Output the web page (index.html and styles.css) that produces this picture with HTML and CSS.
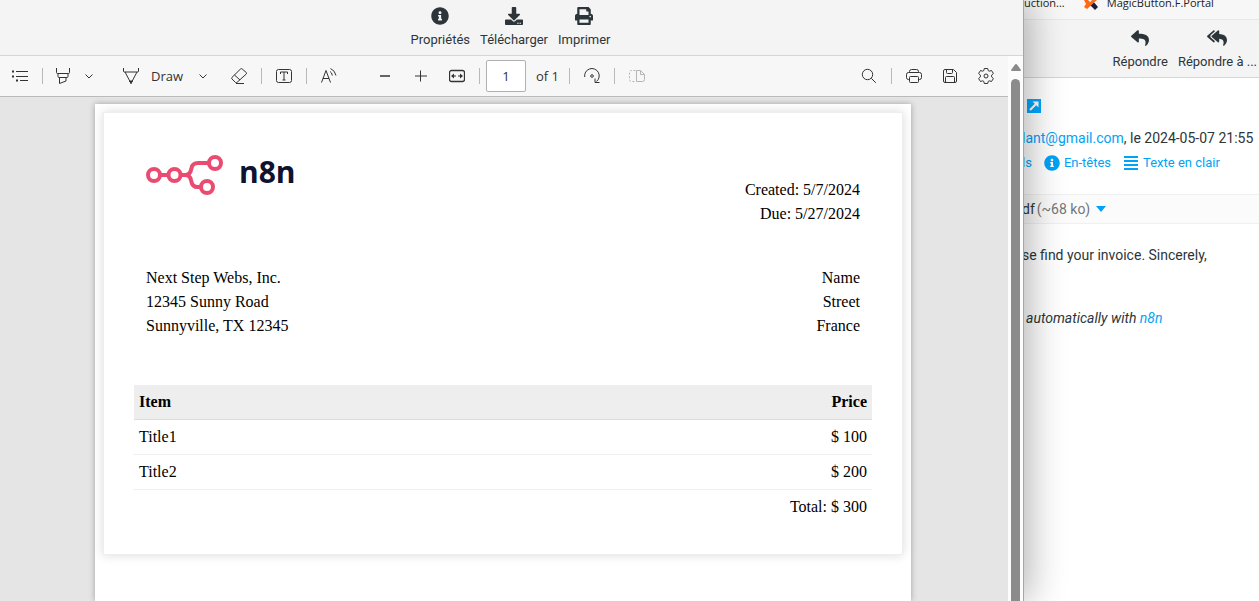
FILE: index.html
```
<!DOCTYPE html>
<html lang="fr">
<head>
<meta charset="utf-8">
<title>Facture</title>
<link rel="stylesheet" href="styles.css">
</head>
<body>
<div class="desktop">
  <main class="preview">
    <header class="preview-actions">
      <button class="action"><svg class="action-icon" viewBox="0 0 512 512"><path d="M256 8C119.043 8 8 119.083 8 256c0 136.997 111.043 248 248 248s248-111.003 248-248C504 119.083 392.957 8 256 8zm0 110c23.196 0 42 18.804 42 42s-18.804 42-42 42-42-18.804-42-42 18.804-42 42-42zm56 254c0 6.627-5.373 12-12 12h-88c-6.627 0-12-5.373-12-12v-24c0-6.627 5.373-12 12-12h12v-64h-12c-6.627 0-12-5.373-12-12v-24c0-6.627 5.373-12 12-12h64c6.627 0 12 5.373 12 12v100h12c6.627 0 12 5.373 12 12v24z"/></svg>Propriétés</button>
      <button class="action"><svg class="action-icon" viewBox="0 0 512 512"><path d="M216 0h80c13.3 0 24 10.7 24 24v168h87.7c17.8 0 26.7 21.5 14.1 34.1L269.7 378.3c-7.5 7.5-19.8 7.5-27.3 0L90.1 226.1c-12.6-12.6-3.7-34.1 14.1-34.1H192V24c0-13.3 10.7-24 24-24zm296 376v112c0 13.3-10.7 24-24 24H24c-13.3 0-24-10.7-24-24V376c0-13.3 10.7-24 24-24h146.7l49 49c20.1 20.1 52.5 20.1 72.6 0l49-49H488c13.3 0 24 10.7 24 24zm-124 88c0-11-9-20-20-20s-20 9-20 20 9 20 20 20 20-9 20-20zm64 0c0-11-9-20-20-20s-20 9-20 20 9 20 20 20 20-9 20-20z"/></svg>Télécharger</button>
      <button class="action"><svg class="action-icon" viewBox="0 0 512 512"><path d="M448 192V77.25c0-8.49-3.37-16.62-9.37-22.63L393.37 9.37c-6-6-14.14-9.37-22.63-9.37H96C78.33 0 64 14.33 64 32v160c-35.35 0-64 28.65-64 64v112c0 8.84 7.16 16 16 16h48v96c0 17.67 14.33 32 32 32h320c17.67 0 32-14.33 32-32v-96h48c8.84 0 16-7.16 16-16V256c0-35.35-28.65-64-64-64zm-64 256H128v-96h256v96zm0-224H128V64h192v48c0 8.84 7.16 16 16 16h48v96zm48 72c-13.25 0-24-10.75-24-24 0-13.26 10.75-24 24-24s24 10.74 24 24c0 13.25-10.75 24-24 24z"/></svg>Imprimer</button>
    </header>
    <div class="viewer">
      <div class="viewer-main">
        <div class="toolbar">
          <button class="tool" aria-label="Contents"><svg viewBox="0 0 16 16"><path d="M4 3.5h12M4 8.5h12M8 12.5h8"/><path d="M0 3.5h2M0 8.5h2M4 12.5h2" stroke-width="2"/></svg></button>
          <span class="sep sep-tight"></span>
          <button class="tool" aria-label="Highlight"><svg viewBox="0 0 16 16"><path d="M1.500 0v4.500q0 1 1 1h11q1 0 1-1V0M3 5.500v3q0 1 1 1h8q1 0 1-1v-3M4.500 9.500v6l6.500-2.500V9.500"/></svg></button>
          <button class="tool chevron gap-m" aria-label="Highlight options"><svg viewBox="0 0 8 8"><path d="M0.500 2.500L4 6l3.500-3.500"/></svg></button>
          <button class="tool draw"><svg viewBox="0 0 16 16"><path d="M0.500 0v3q0 1 1 1h13q1 0 1-1V0M2 4l6 11.300L14 4"/><path d="M6.600 13h2.800L8 15.500z" fill="#333"/></svg>Draw</button>
          <button class="tool chevron gap-s" aria-label="Draw options"><svg viewBox="0 0 8 8"><path d="M0.500 2.500L4 6l3.500-3.500"/></svg></button>
          <button class="tool gap-xl" aria-label="Erase"><svg viewBox="0 0 16 16"><path d="M9.500 1L0.900 9.500q-.7.700 0 1.400l3.500 3.500q.8.700 1.600 0L15.300 6q.7-.8 0-1.500L11.200 1q-.8-.700-1.700 0zM3.500 7l5.500 5M5 15.500h8"/></svg></button>
          <span class="sep"></span>
          <button class="tool" aria-label="Add text"><svg viewBox="0 0 16 16"><rect x="0.500" y="1.500" width="15" height="13" rx="2"/><path d="M4.500 6V4h7v2M8 4v8M6.500 12h3"/></svg></button>
          <span class="sep"></span>
          <button class="tool" aria-label="Read aloud"><svg viewBox="0 0 16 16"><path d="M0.500 14.500L5 2.500l4.500 12M2 10.500h6M9 3.500q2 1 2.300 4M9.500.500q4.500 2 5.500 7"/></svg></button>
          <button class="tool zoom-out" aria-label="Zoom out"><svg viewBox="0 0 16 16"><path d="M3 8h10" stroke-width="1.500"/></svg></button>
          <button class="tool gap-l" aria-label="Zoom in"><svg viewBox="0 0 16 16"><path d="M2 8h12M7.500 2.500v11"/></svg></button>
          <button class="tool gap-l" aria-label="Fit to width"><svg viewBox="0 0 16 16"><rect x="0.500" y="2.500" width="15" height="11" rx="2" stroke-width="1.300"/><path d="M3 8h4M13 8H9"/><path d="M2 8l3-2.500v5zM14 8l-3-2.500v5z" fill="#333" stroke="none"/></svg></button>
          <span class="sep sep-page"></span>
          <label class="page-field"><input class="page-input" type="text" value="1" aria-label="Page"> of 1</label>
          <span class="sep sep-after"></span>
          <button class="tool" aria-label="Rotate"><svg viewBox="0 0 16 16"><path d="M0.700 9A7.300 7.300 0 1 1 12.500 13.500M11 10.500v4h4.500"/><circle cx="8" cy="8" r="1.300"/></svg></button>
          <span class="sep"></span>
          <button class="tool disabled" disabled aria-label="Page view"><svg viewBox="0 0 16 16"><path d="M6.500 2.500h-4q-2 0-2 2v7q0 2 2 2h4" stroke-dasharray="2 1.500"/><path d="M7.500 2.500v11h6q2 0 2-2V6.500l-4-4zM11.500 2.500v4h4"/></svg></button>
          <span class="spacer"></span>
          <button class="tool" aria-label="Search"><svg viewBox="0 0 16 16"><circle cx="6.500" cy="6.500" r="5.200"/><path d="M10.300 10.300l4.500 4.500"/></svg></button>
          <span class="sep"></span>
          <button class="tool" aria-label="Print"><svg viewBox="0 0 16 16"><path d="M3.500 11.500h-1q-2 0-2-2V6.500q0-2 2-2h11q2 0 2 2v3q0 2-2 2h-1M3.500 4.500v-1q0-2 2-2h5q2 0 2 2v1"/><rect x="3.500" y="8.500" width="9" height="6" rx="1"/></svg></button>
          <button class="tool gap-l" aria-label="Save"><svg viewBox="0 0 16 16"><path d="M3 1.500h8.500l3 3V13q0 1.500-1.500 1.500H3q-1.500 0-1.500-1.500V3Q1.500 1.500 3 1.500zM4.500 1.500v3q0 1 1 1h4q1 0 1-1v-3M3.500 14.500v-5q0-1 1-1h7q1 0 1 1v5"/></svg></button>
          <button class="tool gap-l" aria-label="Settings"><svg viewBox="0 0 16 16"><path d="M6.300.500h3.400l.5 2.100 1 .6 2.300-.7 1.900 3-1.800 1.600v1.800l1.800 1.600-1.900 3-2.300-.7-1 .6-.5 2.100H6.300l-.5-2.100-1-.6-2.300.7-1.900-3 1.800-1.600V7.100L.6 5.500l1.900-3 2.300.7 1-.6z" stroke-linejoin="round"/><circle cx="8" cy="8" r="2"/></svg></button>
        </div>
        <div class="canvas">
          <article class="sheet">
            <div class="invoice">
              <div class="invoice-top">
                <div class="logo"><svg class="logo-mark" viewBox="0 0 78 42"><g fill="none" stroke="#ea4b71" stroke-width="4"><circle cx="8" cy="21" r="6"/><circle cx="28.500" cy="21" r="6"/><circle cx="69" cy="9" r="6"/><circle cx="61" cy="33" r="6"/><path d="M14 21h8.500M34.500 21H39q5 0 6-5l.5-2Q46.500 9 52 9h11M39 21q5 0 6 5l.5 2q1 5 6 5H55"/></g></svg>n8n</div>
                <div class="dates">Created: 5/7/2024<br>Due: 5/27/2024</div>
              </div>
              <div class="parties">
                <address>Next Step Webs, Inc.<br>12345 Sunny Road<br>Sunnyville, TX 12345</address>
                <address class="client">Name<br>Street<br>France</address>
              </div>
              <table class="items">
                <thead><tr><th>Item</th><th>Price</th></tr></thead>
                <tbody>
                  <tr><td>Title1</td><td>$ 100</td></tr>
                  <tr><td>Title2</td><td>$ 200</td></tr>
                </tbody>
                <tfoot><tr><td></td><td>Total: $ 300</td></tr></tfoot>
              </table>
            </div>
          </article>
        </div>
      </div>
      <div class="scrollbar"><svg class="scroll-arrow" viewBox="0 0 10 8"><path d="M5 0q.6 0 1 .6L10 6q0 1-1 1H1Q0 7 0 6L4 .6Q4.400 0 5 0z"/></svg><div class="thumb"></div></div>
    </div>
  </main>

  <aside class="mail">
    <nav class="bookmarks">
      <span>uction...</span>
      <span class="bookmark"><svg class="bookmark-icon" viewBox="0 0 16 11"><path d="M9 0l6 7-3 3-5-5z" fill="#1d1d3b"/><path d="M1 0h4l2 2 3-2h4L4 9 1 7l2-3z" fill="#ff6a13"/></svg>MagicButton.F.Portal</span>
    </nav>
    <div class="mail-actions">
      <button class="action"><svg class="action-icon" viewBox="0 0 512 512"><path d="M8.309 189.836L184.313 37.851C199.719 24.546 224 35.347 224 56.015v80.053c160.629 1.839 288 34.032 288 186.258 0 61.441-39.581 122.309-83.333 154.132-13.653 9.931-33.111-2.533-28.077-18.631 45.344-145.012-21.507-183.510-176.590-185.742V360c0 20.700-24.300 31.453-39.687 18.164l-176.004-152c-11.071-9.562-11.086-26.753 0-36.328z"/></svg>Répondre</button>
      <button class="action"><svg class="action-icon wide" viewBox="0 0 576 512"><path d="M136.309 189.836L312.313 37.851C327.720 24.546 352 35.348 352 56.015v82.763c129.182 10.231 224 52.212 224 183.548 0 61.441-39.582 122.309-83.333 154.132-13.653 9.931-33.111-2.533-28.077-18.631 38.512-123.162-3.922-169.482-112.590-182.015v84.175c0 20.701-24.300 31.453-39.687 18.164L136.309 226.164c-11.071-9.561-11.086-26.753 0-36.328zm-128 36.328L184.313 378.150C199.700 391.439 224 380.687 224 359.986v-15.818l-108.606-93.785A55.960 55.960 0 0 1 96 207.998a55.953 55.953 0 0 1 19.393-42.380L224 71.832V56.015c0-20.667-24.280-31.469-39.687-18.164L8.309 189.836c-11.086 9.575-11.071 26.767 0 36.328z"/></svg>Répondre à ...</button>
    </div>
    <section class="mail-head">
      <a class="popout" href="#" aria-label="Ouvrir"><svg viewBox="0 0 14 14"><path d="M3 11l6-6" stroke="#fff" stroke-width="2.200"/><path d="M5.500 2.500h6v6z" fill="#fff"/></svg></a>
      <p class="sender"><a href="#">lant@gmail.com</a>, le 2024-05-07 21:55</p>
      <div class="links">
        <a href="#">ls</a>
        <a class="link" href="#"><svg viewBox="0 0 512 512"><path d="M256 8C119.043 8 8 119.083 8 256c0 136.997 111.043 248 248 248s248-111.003 248-248C504 119.083 392.957 8 256 8zm0 110c23.196 0 42 18.804 42 42s-18.804 42-42 42-42-18.804-42-42 18.804-42 42-42zm56 254c0 6.627-5.373 12-12 12h-88c-6.627 0-12-5.373-12-12v-24c0-6.627 5.373-12 12-12h12v-64h-12c-6.627 0-12-5.373-12-12v-24c0-6.627 5.373-12 12-12h64c6.627 0 12 5.373 12 12v100h12c6.627 0 12 5.373 12 12v24z"/></svg>En-têtes</a>
        <a class="link" href="#"><svg viewBox="0 0 16 16"><path d="M1 1h14v2H1zM1 5h14v2H1zM1 9h14v2H1zM1 13h14v2H1z"/></svg>Texte en clair</a>
      </div>
    </section>
    <div class="attachment"><span>df</span><span class="size">(~68 ko)</span><svg class="caret" viewBox="0 0 10 6"><path d="M0 0h10L5 6z"/></svg></div>
    <section class="body">
      <p>se find your invoice. Sincerely,</p>
      <p class="signature">automatically with <a href="#">n8n</a></p>
    </section>
  </aside>
</div>
</body>
</html>
```
FILE: styles.css
```
* { box-sizing: border-box; }
body { margin: 0; font-family: Roboto, sans-serif; color: #2c363a; background: #fff; }
p { margin: 0; }
a { color: #00a3f7; text-decoration: none; }
button { border: 0; padding: 0; background: none; color: inherit; font: inherit; }
svg { display: block; flex: none; }

.desktop { display: grid; grid-template-columns: minmax(0, 1fr) 235px; height: 100vh; overflow: hidden; }

.preview { display: flex; flex-direction: column; min-height: 0; position: relative; z-index: 1; border-right: 1px solid #a6a6a6; box-shadow: 4px 0 36px rgba(0, 0, 0, 0.32); background: #fff; }
.preview-actions { display: flex; justify-content: center; gap: 10px; padding: 7px 2px 7px 0; background: #f4f4f4; border-bottom: 1px solid #d3d6d9; }
.action { display: flex; flex-direction: column; align-items: center; gap: 6px; font-size: 13px; line-height: 17px; white-space: nowrap; }
.action-icon { width: 18px; height: 18px; fill: #2c363a; }
.action-icon.wide { width: 20px; }

.viewer { display: flex; flex: 1; min-height: 0; }
.viewer-main { flex: 1; min-width: 0; display: flex; flex-direction: column; }
.toolbar { display: flex; align-items: center; height: 41px; flex: none; padding: 0 14px 0 12px; background: #f7f7f7; border-bottom: 1px solid #b9bbbb; font: 13px/18px "Open Sans", sans-serif; color: #333; }
.tool svg { width: 16px; height: 16px; fill: none; stroke: #333; }
.tool.chevron svg { width: 8px; height: 8px; }
.tool.disabled svg { stroke: #b5b5b5; }
.sep { width: 1px; height: 16px; margin: 0 14px; background: #b9b9b9; }
.sep-tight { margin-right: 12px; }
.sep-page { margin-right: 6px; }
.sep-after { margin-left: 10px; }
.gap-m { margin-left: 14px; }
.gap-s { margin-left: 16px; }
.gap-l { margin-left: 20px; }
.gap-xl { margin-left: 24px; }
.draw { display: flex; align-items: center; gap: 12px; margin-left: 30px; }
.zoom-out { margin-left: 40px; }
.page-field { display: flex; align-items: center; gap: 10px; }
.page-input { width: 40px; height: 32px; padding: 0; border: 1px solid #b0b0b0; border-radius: 2px; background: #fff; text-align: center; font: inherit; color: inherit; }
.spacer { flex: 1; }

.canvas { flex: 1; min-height: 0; display: flex; justify-content: center; padding: 7px 2px 0 0; background: #e5e5e5; overflow: hidden; }
.sheet { width: 816px; padding: 8px; background: #fff; box-shadow: 0 0 6px rgba(0, 0, 0, 0.3); font: 16px/24px "Liberation Serif", serif; color: #000; }
.invoice { padding: 30px; border: 1px solid #eee; box-shadow: 0 0 10px rgba(0, 0, 0, 0.15); }
.invoice-top, .parties { display: flex; justify-content: space-between; padding: 0 12px; }
.invoice-top { padding-top: 11px; padding-bottom: 40px; }
.logo { display: flex; gap: 15px; height: 42px; font: 700 30px/36px "Open Sans", sans-serif; color: #101330; }
.logo-mark { width: 78px; height: 42px; }
.dates { padding-top: 24px; text-align: right; }
.client { text-align: right; }
address { font-style: normal; }
.items { width: 100%; margin-top: 47px; border-collapse: separate; border-spacing: 0; }
.items th, .items td { padding: 5px; text-align: left; border-bottom: 1px solid #eee; }
.items th { background: #eee; border-bottom-color: #ddd; }
.items th:last-child, .items td:last-child { text-align: right; }
.items tfoot td { border-bottom: 0; }

.scrollbar { width: 15px; padding: 8px 3px 0; display: flex; flex-direction: column; align-items: center; gap: 7px; background: #fcfcfc; }
.scroll-arrow { width: 10px; height: 8px; fill: #8b8b8b; }
.thumb { flex: 1; width: 9px; background: #8b8b8b; border-radius: 5px 5px 0 0; }

.mail { min-width: 0; margin-left: -2px; overflow: hidden; white-space: nowrap; font-size: 14px; line-height: 20px; }
.bookmarks { display: flex; align-items: flex-start; gap: 18px; height: 20px; padding-left: 2px; overflow: hidden; background: #f7f7f7; border-bottom: 1px solid #e8e8e8; font: 11px/6px "Open Sans", sans-serif; color: #222; }
.bookmark { display: flex; gap: 8px; }
.bookmark-icon { width: 16px; height: 11px; }
.mail-actions { display: flex; justify-content: flex-end; gap: 10px; padding: 9px 2px 7px 0; background: #f4f4f4; border-bottom: 1px solid #d3d6d9; }
.mail-head { padding: 21px 0; }
.popout { display: block; width: 14px; height: 14px; margin: 0 5px 15px; background: #00a9ff; }
.links { display: flex; align-items: center; gap: 12px; margin-top: 5px; font-size: 13px; }
.link { display: flex; align-items: center; gap: 4px; }
.link svg { width: 16px; height: 16px; fill: #00a3f7; }
.attachment { display: flex; align-items: center; gap: 2px; height: 30px; background: #fbfbfb; border: solid #f0f0f0; border-width: 1px 0; }
.size { color: #737677; }
.caret { width: 10px; height: 6px; margin-left: 4px; fill: #00a3f7; }
.body { padding-top: 21px; }
.signature { margin-top: 43px; padding-left: 4px; font-style: italic; }
```
